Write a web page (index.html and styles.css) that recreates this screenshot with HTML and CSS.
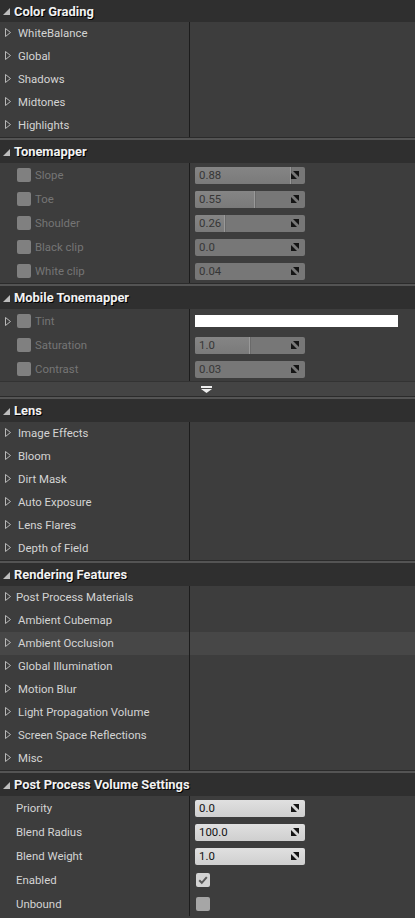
FILE: index.html
```html
<!DOCTYPE html>
<html>
<head>
<meta charset="utf-8">
<link rel="stylesheet" href="styles.css">
</head>
<body>
<div class="panel">

  <section class="sec first">
    <div class="hdr"><svg class="tri" width="7" height="7" viewBox="0 0 7 7"><polygon points="7,0 7,7 0,7"/></svg><span>Color Grading</span></div>
    <div class="rows r23">
      <div class="row"><div class="name"><svg class="exp" width="6" height="9" viewBox="0 0 6 9"><polygon points="0.5,0.5 5.5,4.5 0.5,8.5"/></svg><span class="lbl">WhiteBalance</span></div><div class="val"></div></div>
      <div class="row"><div class="name"><svg class="exp" width="6" height="9" viewBox="0 0 6 9"><polygon points="0.5,0.5 5.5,4.5 0.5,8.5"/></svg><span class="lbl">Global</span></div><div class="val"></div></div>
      <div class="row"><div class="name"><svg class="exp" width="6" height="9" viewBox="0 0 6 9"><polygon points="0.5,0.5 5.5,4.5 0.5,8.5"/></svg><span class="lbl">Shadows</span></div><div class="val"></div></div>
      <div class="row"><div class="name"><svg class="exp" width="6" height="9" viewBox="0 0 6 9"><polygon points="0.5,0.5 5.5,4.5 0.5,8.5"/></svg><span class="lbl">Midtones</span></div><div class="val"></div></div>
      <div class="row"><div class="name"><svg class="exp" width="6" height="9" viewBox="0 0 6 9"><polygon points="0.5,0.5 5.5,4.5 0.5,8.5"/></svg><span class="lbl">Highlights</span></div><div class="val"></div></div>
    </div>
  </section>

  <section class="sec">
    <div class="hdr"><svg class="tri" width="7" height="7" viewBox="0 0 7 7"><polygon points="7,0 7,7 0,7"/></svg><span>Tonemapper</span></div>
    <div class="rows r24">
      <div class="row"><div class="name"><span class="cb dis"></span><span class="lbl off">Slope</span></div><div class="val"><div class="field dim"><span class="fill" style="width:86%"></span><span class="num">0.88</span><svg class="spin" width="8" height="8" viewBox="0 0 8 8"><polygon points="2,0 8,0 8,6"/><polygon points="0,2 0,8 6,8"/></svg></div></div></div>
      <div class="row"><div class="name"><span class="cb dis"></span><span class="lbl off">Toe</span></div><div class="val"><div class="field dim"><span class="fill" style="width:54%"></span><span class="num">0.55</span><svg class="spin" width="8" height="8" viewBox="0 0 8 8"><polygon points="2,0 8,0 8,6"/><polygon points="0,2 0,8 6,8"/></svg></div></div></div>
      <div class="row"><div class="name"><span class="cb dis"></span><span class="lbl off">Shoulder</span></div><div class="val"><div class="field dim"><span class="fill" style="width:26%"></span><span class="num">0.26</span><svg class="spin" width="8" height="8" viewBox="0 0 8 8"><polygon points="2,0 8,0 8,6"/><polygon points="0,2 0,8 6,8"/></svg></div></div></div>
      <div class="row"><div class="name"><span class="cb dis"></span><span class="lbl off">Black clip</span></div><div class="val"><div class="field dim"><span class="num">0.0</span><svg class="spin" width="8" height="8" viewBox="0 0 8 8"><polygon points="2,0 8,0 8,6"/><polygon points="0,2 0,8 6,8"/></svg></div></div></div>
      <div class="row"><div class="name"><span class="cb dis"></span><span class="lbl off">White clip</span></div><div class="val"><div class="field dim"><span class="num">0.04</span><svg class="spin" width="8" height="8" viewBox="0 0 8 8"><polygon points="2,0 8,0 8,6"/><polygon points="0,2 0,8 6,8"/></svg></div></div></div>
    </div>
  </section>

  <section class="sec">
    <div class="hdr"><svg class="tri" width="7" height="7" viewBox="0 0 7 7"><polygon points="7,0 7,7 0,7"/></svg><span>Mobile Tonemapper</span></div>
    <div class="rows r24">
      <div class="row"><div class="name"><svg class="exp" width="6" height="9" viewBox="0 0 6 9"><polygon points="0.5,0.5 5.5,4.5 0.5,8.5"/></svg><span class="cb dis withexp"></span><span class="lbl off">Tint</span></div><div class="val"><div class="tint"></div></div></div>
      <div class="row"><div class="name"><span class="cb dis"></span><span class="lbl off">Saturation</span></div><div class="val"><div class="field dim"><span class="fill" style="width:49%"></span><span class="num">1.0</span><svg class="spin" width="8" height="8" viewBox="0 0 8 8"><polygon points="2,0 8,0 8,6"/><polygon points="0,2 0,8 6,8"/></svg></div></div></div>
      <div class="row"><div class="name"><span class="cb dis"></span><span class="lbl off">Contrast</span></div><div class="val"><div class="field dim"><span class="num">0.03</span><svg class="spin" width="8" height="8" viewBox="0 0 8 8"><polygon points="2,0 8,0 8,6"/><polygon points="0,2 0,8 6,8"/></svg></div></div></div>
    </div>
    <div class="adv"><svg width="11" height="7" viewBox="0 0 11 7"><rect x="0" y="0" width="11" height="2"/><polygon points="0,3 11,3 5.5,7"/></svg></div>
  </section>

  <section class="sec">
    <div class="hdr"><svg class="tri" width="7" height="7" viewBox="0 0 7 7"><polygon points="7,0 7,7 0,7"/></svg><span>Lens</span></div>
    <div class="rows r23">
      <div class="row"><div class="name"><svg class="exp" width="6" height="9" viewBox="0 0 6 9"><polygon points="0.5,0.5 5.5,4.5 0.5,8.5"/></svg><span class="lbl">Image Effects</span></div><div class="val"></div></div>
      <div class="row"><div class="name"><svg class="exp" width="6" height="9" viewBox="0 0 6 9"><polygon points="0.5,0.5 5.5,4.5 0.5,8.5"/></svg><span class="lbl">Bloom</span></div><div class="val"></div></div>
      <div class="row"><div class="name"><svg class="exp" width="6" height="9" viewBox="0 0 6 9"><polygon points="0.5,0.5 5.5,4.5 0.5,8.5"/></svg><span class="lbl">Dirt Mask</span></div><div class="val"></div></div>
      <div class="row"><div class="name"><svg class="exp" width="6" height="9" viewBox="0 0 6 9"><polygon points="0.5,0.5 5.5,4.5 0.5,8.5"/></svg><span class="lbl">Auto Exposure</span></div><div class="val"></div></div>
      <div class="row"><div class="name"><svg class="exp" width="6" height="9" viewBox="0 0 6 9"><polygon points="0.5,0.5 5.5,4.5 0.5,8.5"/></svg><span class="lbl">Lens Flares</span></div><div class="val"></div></div>
      <div class="row"><div class="name"><svg class="exp" width="6" height="9" viewBox="0 0 6 9"><polygon points="0.5,0.5 5.5,4.5 0.5,8.5"/></svg><span class="lbl">Depth of Field</span></div><div class="val"></div></div>
    </div>
  </section>

  <section class="sec">
    <div class="hdr"><svg class="tri" width="7" height="7" viewBox="0 0 7 7"><polygon points="7,0 7,7 0,7"/></svg><span>Rendering Features</span></div>
    <div class="rows r23">
      <div class="row"><div class="name"><svg class="exp" width="6" height="9" viewBox="0 0 6 9"><polygon points="0.5,0.5 5.5,4.5 0.5,8.5"/></svg><span class="lbl tight">Post Process Materials</span></div><div class="val"></div></div>
      <div class="row"><div class="name"><svg class="exp" width="6" height="9" viewBox="0 0 6 9"><polygon points="0.5,0.5 5.5,4.5 0.5,8.5"/></svg><span class="lbl">Ambient Cubemap</span></div><div class="val"></div></div>
      <div class="row hover"><div class="name"><svg class="exp" width="6" height="9" viewBox="0 0 6 9"><polygon points="0.5,0.5 5.5,4.5 0.5,8.5"/></svg><span class="lbl">Ambient Occlusion</span></div><div class="val"></div></div>
      <div class="row"><div class="name"><svg class="exp" width="6" height="9" viewBox="0 0 6 9"><polygon points="0.5,0.5 5.5,4.5 0.5,8.5"/></svg><span class="lbl">Global Illumination</span></div><div class="val"></div></div>
      <div class="row"><div class="name"><svg class="exp" width="6" height="9" viewBox="0 0 6 9"><polygon points="0.5,0.5 5.5,4.5 0.5,8.5"/></svg><span class="lbl">Motion Blur</span></div><div class="val"></div></div>
      <div class="row"><div class="name"><svg class="exp" width="6" height="9" viewBox="0 0 6 9"><polygon points="0.5,0.5 5.5,4.5 0.5,8.5"/></svg><span class="lbl">Light Propagation Volume</span></div><div class="val"></div></div>
      <div class="row"><div class="name"><svg class="exp" width="6" height="9" viewBox="0 0 6 9"><polygon points="0.5,0.5 5.5,4.5 0.5,8.5"/></svg><span class="lbl">Screen Space Reflections</span></div><div class="val"></div></div>
      <div class="row"><div class="name"><svg class="exp" width="6" height="9" viewBox="0 0 6 9"><polygon points="0.5,0.5 5.5,4.5 0.5,8.5"/></svg><span class="lbl">Misc</span></div><div class="val"></div></div>
    </div>
  </section>

  <section class="sec">
    <div class="hdr"><svg class="tri" width="7" height="7" viewBox="0 0 7 7"><polygon points="7,0 7,7 0,7"/></svg><span>Post Process Volume Settings</span></div>
    <div class="rows r24">
      <div class="row"><div class="name plain"><span class="lbl">Priority</span></div><div class="val"><div class="field lite"><span class="num">0.0</span><svg class="spin" width="8" height="8" viewBox="0 0 8 8"><polygon points="2,0 8,0 8,6"/><polygon points="0,2 0,8 6,8"/></svg></div></div></div>
      <div class="row"><div class="name plain"><span class="lbl">Blend Radius</span></div><div class="val"><div class="field lite"><span class="num">100.0</span><svg class="spin" width="8" height="8" viewBox="0 0 8 8"><polygon points="2,0 8,0 8,6"/><polygon points="0,2 0,8 6,8"/></svg></div></div></div>
      <div class="row"><div class="name plain"><span class="lbl">Blend Weight</span></div><div class="val"><div class="field lite"><span class="fill full" style="width:100%"></span><span class="num">1.0</span><svg class="spin" width="8" height="8" viewBox="0 0 8 8"><polygon points="2,0 8,0 8,6"/><polygon points="0,2 0,8 6,8"/></svg></div></div></div>
      <div class="row"><div class="name plain"><span class="lbl">Enabled</span></div><div class="val"><span class="cb on"><svg width="14" height="14" viewBox="0 0 14 14"><path d="M3.2 7.2 L5.8 9.8 L10.8 4.2"/></svg></span></div></div>
      <div class="row"><div class="name plain"><span class="lbl">Unbound</span></div><div class="val"><span class="cb empty"></span></div></div>
    </div>
  </section>

</div>
</body>
</html>
```

FILE: styles.css
```css
html, body {
  margin: 0;
  padding: 0;
  background: #3d3d3d;
}

.panel {
  width: 415px;
  height: 918px;
  overflow: hidden;
  background: #3d3d3d;
  font-family: Roboto, "Liberation Sans", sans-serif;
  font-size: 11.4px;
  color: #d4d4d4;
}

.sec {
  border-top: 1px solid #2b2b2b;
  box-shadow: inset 0 1px 0 #545454, inset 0 2px 0 #545454;
  padding-top: 2px;
}
.sec.first {
  border-top: 0;
  box-shadow: none;
  padding-top: 0;
}

.hdr {
  height: 23px;
  display: flex;
  align-items: center;
  background: #2f2f2f;
  color: #f2f2f2;
  font-weight: bold;
  font-size: 12.9px;
  text-shadow: 1px 1px 0 #000;
  padding-left: 3px;
}
.first .hdr { height: 22px; }

.tri {
  fill: #bdbdbd;
  margin-right: 4px;
  margin-top: 1px;
}

.rows .row {
  display: flex;
  align-items: stretch;
}
.r23 .row { height: 23px; }
.r24 .row { height: 24px; }
.r23 .name { padding-bottom: 2px; }

.row.hover { background: #474747; }

.name {
  width: 190px;
  flex: none;
  border-right: 1px solid #1c1c1c;
  display: flex;
  align-items: center;
  padding-left: 5px;
  box-sizing: border-box;
}
.name.plain { padding-left: 16px; }

.exp {
  fill: none;
  stroke: #b8b8b8;
  stroke-width: 1;
  flex: none;
}

.lbl { margin-left: 7px; white-space: nowrap; }
.lbl.tight { margin-left: 5px; }
.plain .lbl { margin-left: 0; }
.lbl.off { color: #757575; margin-left: 4px; }

.cb {
  width: 14px;
  height: 14px;
  border-radius: 2px;
  flex: none;
  box-sizing: border-box;
}
.cb.dis {
  background: #808080;
  margin-left: 12px;
}
.cb.dis.withexp { margin-left: 6px; }

.val {
  flex: 1;
  display: flex;
  align-items: center;
  padding-left: 5px;
}

.field {
  position: relative;
  width: 110px;
  height: 17px;
  border-radius: 2px;
  display: flex;
  align-items: center;
  overflow: hidden;
  box-sizing: border-box;
}
.field.dim {
  background: #777777;
  color: #363636;
}
.field.lite {
  background: linear-gradient(#e0e0e0, #cfcfcf);
  color: #111;
}
.fill {
  position: absolute;
  left: 0;
  top: 0;
  bottom: 0;
  background: linear-gradient(#858585, #7a7a7a);
  border-right: 1px solid #999;
  box-shadow: 1px 0 0 #6a6a6a;
}
.fill.full {
  background: transparent;
  border-right: 1px solid #9a9a9a;
  box-shadow: none;
}
.num {
  position: relative;
  padding-left: 4px;
  flex: 1;
}
.spin {
  position: relative;
  fill: #141414;
  margin-right: 6px;
}

.tint {
  width: 203px;
  height: 12px;
  background: #ffffff;
}

.cb.on {
  background: #d3d3d3;
  margin-left: 1px;
  display: flex;
}
.cb.on path {
  fill: none;
  stroke: #5a5a5a;
  stroke-width: 2;
}
.cb.empty {
  background: #a6a6a6;
  margin-left: 1px;
}

.adv {
  height: 14px;
  border-top: 1px solid #333;
  background: #444444;
  display: flex;
  justify-content: center;
  align-items: center;
}
.adv svg { fill: #eeeeee; margin-left: -2px; }
```
